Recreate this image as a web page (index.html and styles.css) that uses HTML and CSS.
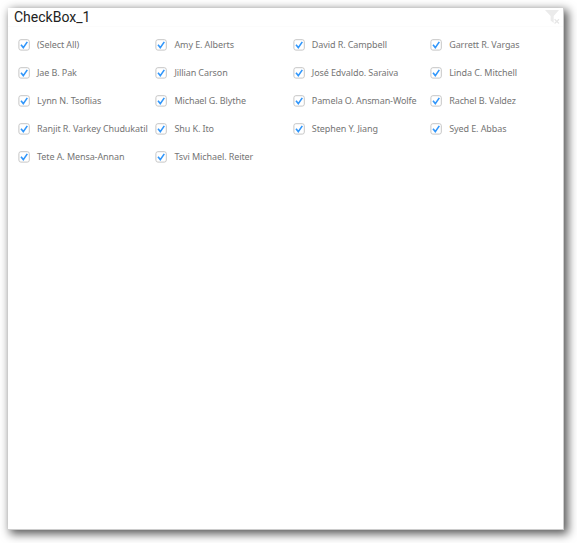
FILE: index.html
```html
<!DOCTYPE html>
<html lang="en">
<head>
<meta charset="utf-8">
<title>CheckBox_1</title>
<link rel="stylesheet" href="styles.css">
</head>
<body>
<svg width="0" height="0" class="defs"><symbol id="box" viewBox="0 0 12 12"><rect x=".9" y=".7" width="10.4" height="10.4" rx="2" fill="#fff" stroke="#c6c6c6"/><path d="M3 5.8 5.3 8.6 9.3 2.9" fill="none" stroke="#3096fa" stroke-width="1.6"/></symbol></svg>
<main class="panel">
  <header class="head">
    <h1 class="title">CheckBox_1</h1>
    <svg class="filter" width="16" height="15" viewBox="0 0 16 15"><path d="M0 0H14L8.7 6V13L5.6 10.5V6Z" fill="#ebebeb"/><path d="M9.6 9.3 14 13.5M14 9.3 9.6 13.5" stroke="#e6e6e6" stroke-width="1.2"/></svg>
  </header>
  <ul class="list">
    <li><svg><use href="#box"/></svg><span>(Select All)</span></li>
    <li><svg><use href="#box"/></svg><span>Amy E. Alberts</span></li>
    <li><svg><use href="#box"/></svg><span>David R. Campbell</span></li>
    <li><svg><use href="#box"/></svg><span>Garrett R. Vargas</span></li>
    <li><svg><use href="#box"/></svg><span>Jae B. Pak</span></li>
    <li><svg><use href="#box"/></svg><span>Jillian Carson</span></li>
    <li><svg><use href="#box"/></svg><span>José Edvaldo. Saraiva</span></li>
    <li><svg><use href="#box"/></svg><span>Linda C. Mitchell</span></li>
    <li><svg><use href="#box"/></svg><span>Lynn N. Tsoflias</span></li>
    <li><svg><use href="#box"/></svg><span>Michael G. Blythe</span></li>
    <li><svg><use href="#box"/></svg><span>Pamela O. Ansman-Wolfe</span></li>
    <li><svg><use href="#box"/></svg><span>Rachel B. Valdez</span></li>
    <li><svg><use href="#box"/></svg><span>Ranjit R. Varkey Chudukatil</span></li>
    <li><svg><use href="#box"/></svg><span>Shu K. Ito</span></li>
    <li><svg><use href="#box"/></svg><span>Stephen Y. Jiang</span></li>
    <li><svg><use href="#box"/></svg><span>Syed E. Abbas</span></li>
    <li><svg><use href="#box"/></svg><span>Tete A. Mensa-Annan</span></li>
    <li><svg><use href="#box"/></svg><span>Tsvi Michael. Reiter</span></li>
  </ul>
</main>
</body>
</html>
```
FILE: styles.css
```css
* { box-sizing: border-box; }
body { margin: 0; padding: 8px; height: 543px; overflow: hidden; background: #fff; }
.defs { display: none; }
.panel {
  width: 556px;
  height: 522px;
  background: #fff;
  border-right: 1px solid #ccc;
  border-bottom: 1px solid #ccc;
  box-shadow: 3px 3px 9px 1px rgba(0, 0, 0, .66);
}
.head {
  display: flex;
  justify-content: space-between;
  height: 19px;
  padding: 0 2px 0 6px;
  border-bottom: 1px solid #fcfcfc;
}
.title {
  margin: 0;
  font: 400 14px/19px Roboto, sans-serif;
  color: #222;
}
.filter { margin-top: 2px; }
.list {
  display: grid;
  grid-template-columns: repeat(4, 137.4px);
  grid-auto-rows: 28px;
  margin: 4px 0 0;
  padding: 0 0 0 10px;
  list-style: none;
}
.list li { display: flex; align-items: center; gap: 7px; }
.list svg { width: 12px; height: 12px; flex: none; }
.list span {
  font: 9px/14px "Noto Sans", sans-serif;
  letter-spacing: -.09px;
  color: #757575;
  white-space: nowrap;
}
```
